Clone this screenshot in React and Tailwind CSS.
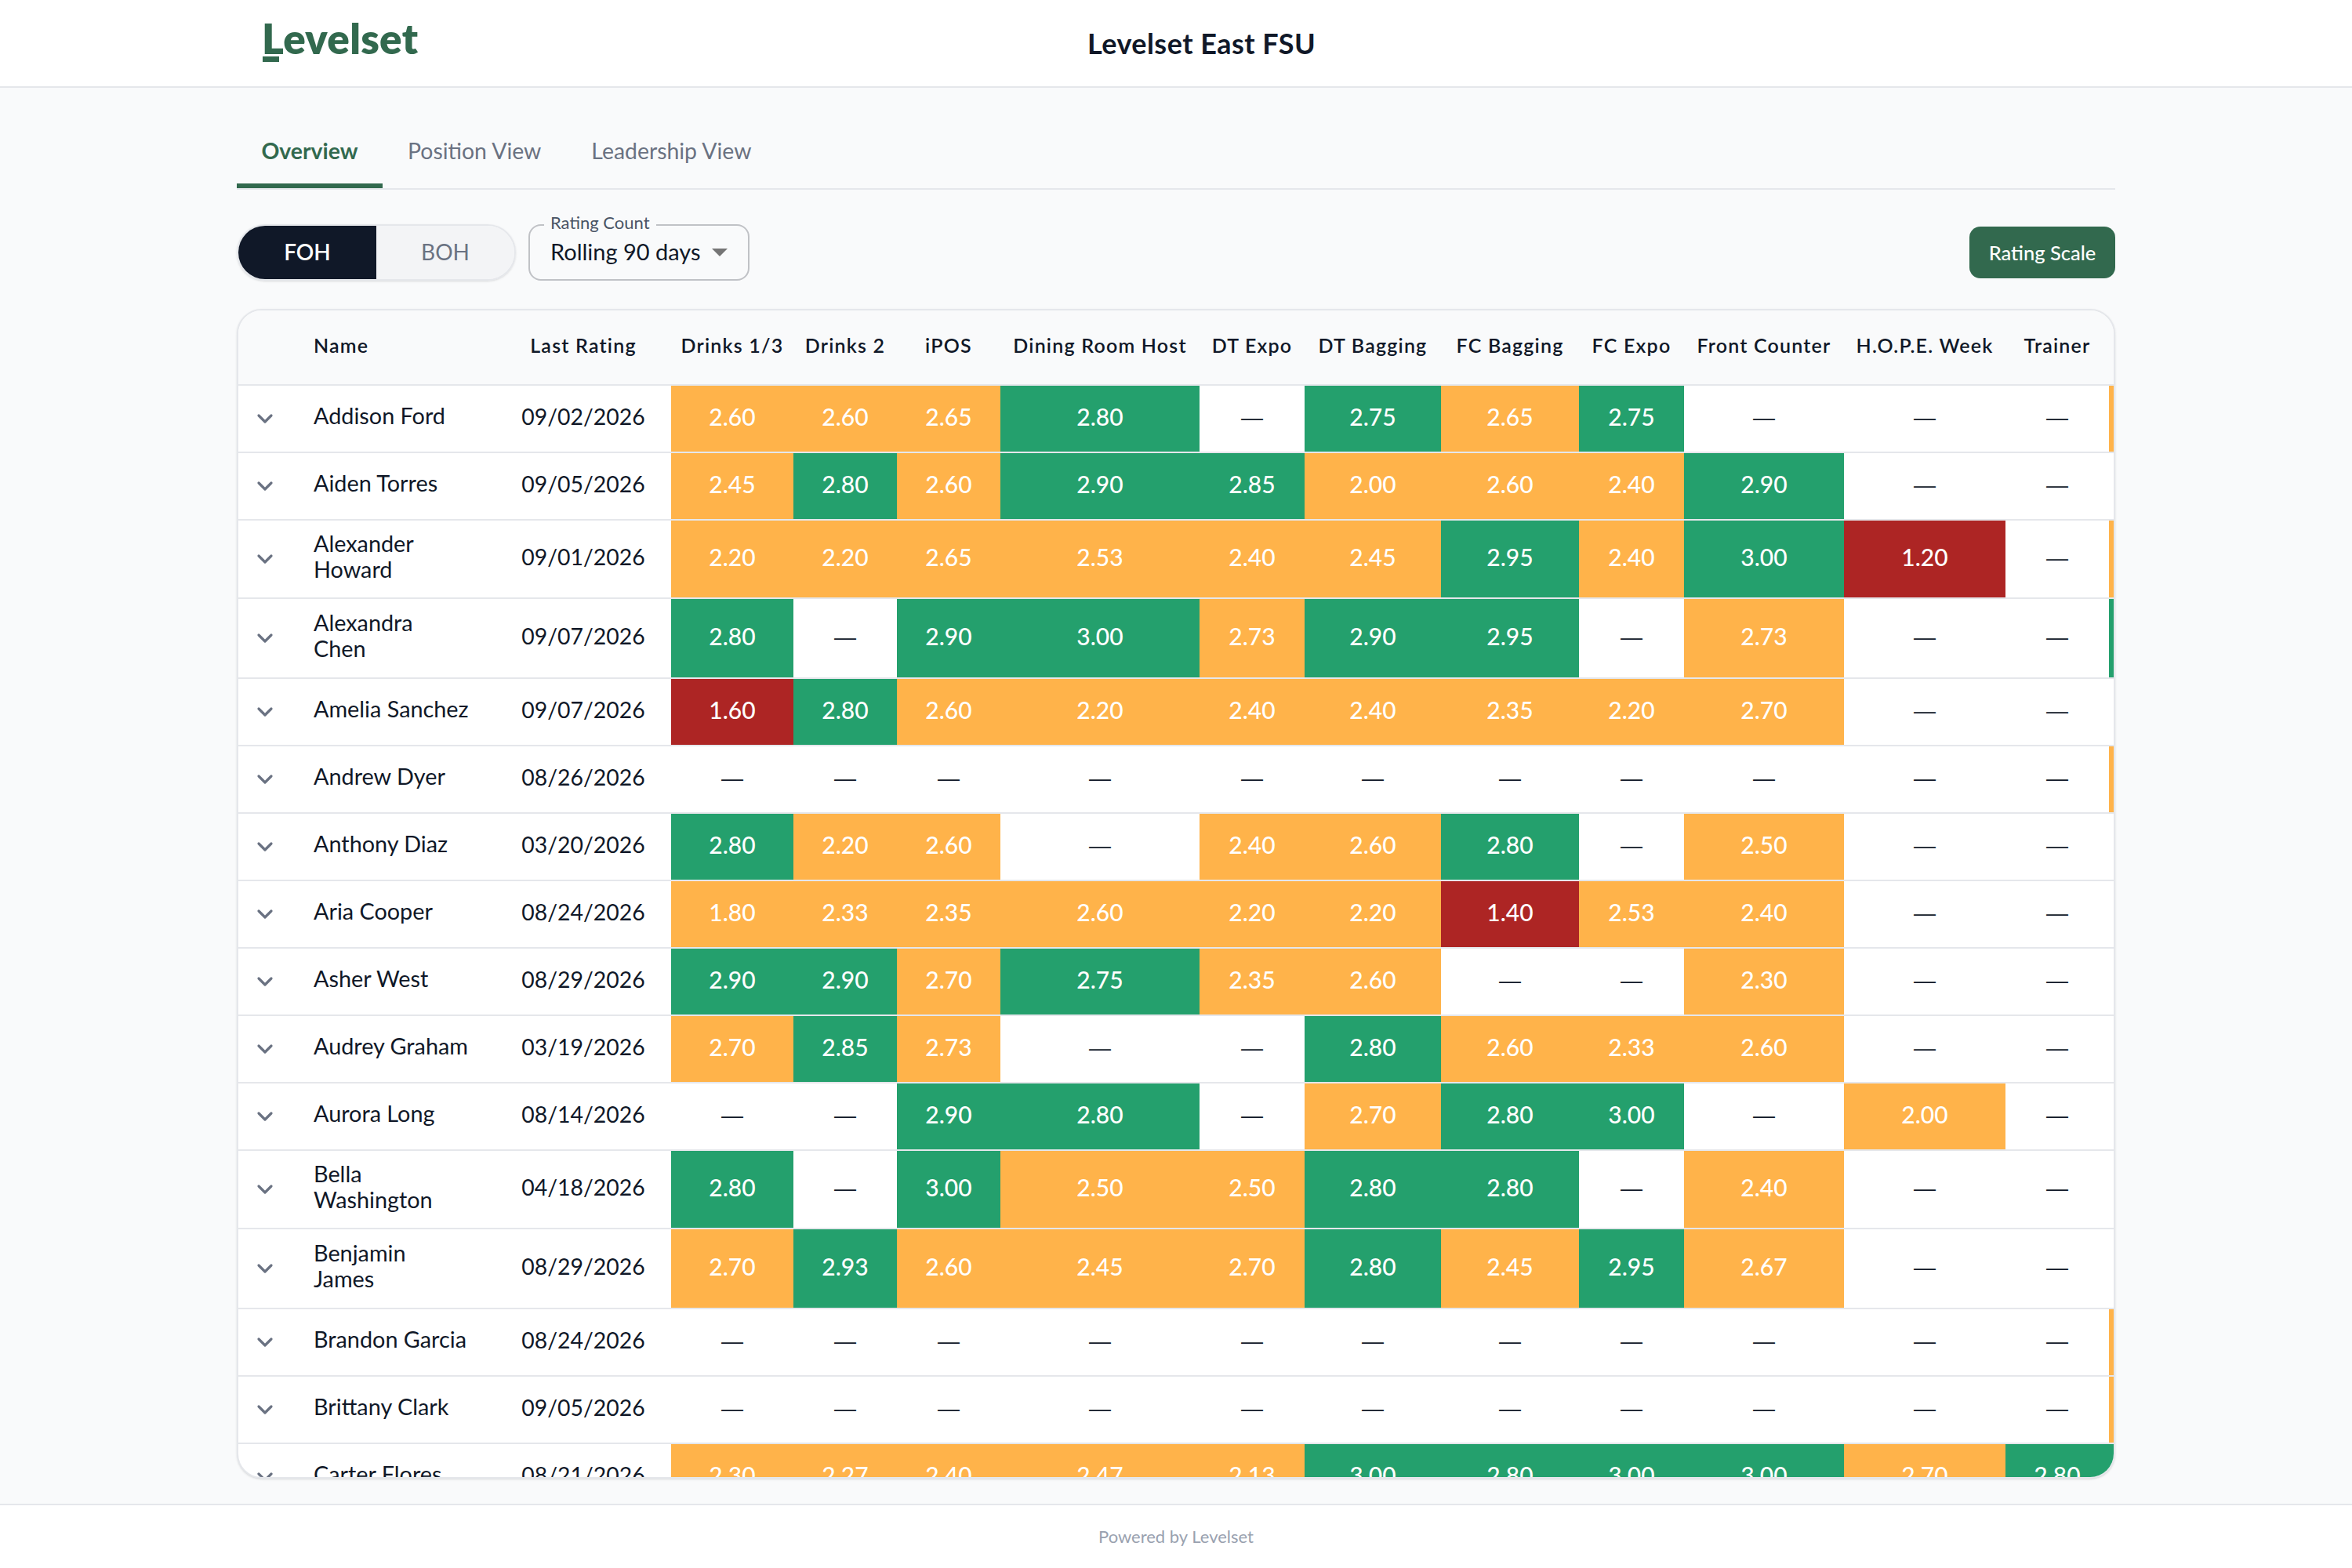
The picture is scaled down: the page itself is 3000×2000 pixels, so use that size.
import { ChevronDown } from 'lucide-react'

const columns = [
  'Drinks 1/3',
  'Drinks 2',
  'iPOS',
  'Dining Room Host',
  'DT Expo',
  'DT Bagging',
  'FC Bagging',
  'FC Expo',
  'Front Counter',
  'H.O.P.E. Week',
  'Trainer',
]

const colWidths = [
  'w-[68px]',
  'w-[260px]',
  'w-[224px]',
  'w-[156px]',
  'w-[132px]',
  'w-[132px]',
  'w-[254px]',
  'w-[134px]',
  'w-[174px]',
  'w-[176px]',
  'w-[134px]',
  'w-[204px]',
  'w-[206px]',
  'w-[132px]',
  'w-[6px]',
]

const _ = null
const none = [_, _, _, _, _, _, _, _, _, _, _]

const rows = [
  { name: 'Addison Ford', date: '09/02/2026', bar: 'bg-[#ffb34a]', scores: ['2.60', '2.60', '2.65', '2.80', _, '2.75', '2.65', '2.75', _, _, _] },
  { name: 'Aiden Torres', date: '09/05/2026', scores: ['2.45', '2.80', '2.60', '2.90', '2.85', '2.00', '2.60', '2.40', '2.90', _, _] },
  { name: 'Alexander Howard', date: '09/01/2026', tall: 'h-[100px]', bar: 'bg-[#ffb34a]', scores: ['2.20', '2.20', '2.65', '2.53', '2.40', '2.45', '2.95', '2.40', '3.00', '1.20', _] },
  { name: 'Alexandra Chen', date: '09/07/2026', tall: 'h-[102px]', bar: 'bg-[#24a06d]', scores: ['2.80', _, '2.90', '3.00', '2.73', '2.90', '2.95', _, '2.73', _, _] },
  { name: 'Amelia Sanchez', date: '09/07/2026', scores: ['1.60', '2.80', '2.60', '2.20', '2.40', '2.40', '2.35', '2.20', '2.70', _, _] },
  { name: 'Andrew Dyer', date: '08/26/2026', bar: 'bg-[#ffb34a]', scores: none },
  { name: 'Anthony Diaz', date: '03/20/2026', scores: ['2.80', '2.20', '2.60', _, '2.40', '2.60', '2.80', _, '2.50', _, _] },
  { name: 'Aria Cooper', date: '08/24/2026', scores: ['1.80', '2.33', '2.35', '2.60', '2.20', '2.20', '1.40', '2.53', '2.40', _, _] },
  { name: 'Asher West', date: '08/29/2026', scores: ['2.90', '2.90', '2.70', '2.75', '2.35', '2.60', _, _, '2.30', _, _] },
  { name: 'Audrey Graham', date: '03/19/2026', scores: ['2.70', '2.85', '2.73', _, _, '2.80', '2.60', '2.33', '2.60', _, _] },
  { name: 'Aurora Long', date: '08/14/2026', scores: [_, _, '2.90', '2.80', _, '2.70', '2.80', '3.00', _, '2.00', _] },
  { name: 'Bella Washington', date: '04/18/2026', tall: 'h-[100px]', scores: ['2.80', _, '3.00', '2.50', '2.50', '2.80', '2.80', _, '2.40', _, _] },
  { name: 'Benjamin James', date: '08/29/2026', tall: 'h-[102px]', scores: ['2.70', '2.93', '2.60', '2.45', '2.70', '2.80', '2.45', '2.95', '2.67', _, _] },
  { name: 'Brandon Garcia', date: '08/24/2026', bar: 'bg-[#ffb34a]', scores: none },
  { name: 'Brittany Clark', date: '09/05/2026', bar: 'bg-[#ffb34a]', scores: none },
  { name: 'Carter Flores', date: '08/21/2026', bar: 'bg-[#24a06d]', scores: ['2.30', '2.27', '2.40', '2.47', '2.13', '3.00', '2.80', '3.00', '3.00', '2.70', '2.80'] },
]

function scoreColor(score) {
  const n = Number(score)
  if (n >= 2.75) return 'bg-[#24a06d]'
  if (n < 1.75) return 'bg-[#ad2524]'
  return 'bg-[#ffb34a]'
}

function ScoreCell({ score }) {
  if (!score) {
    return (
      <td className="border-b-2 border-gray-200 pb-[2px] text-center font-['Liberation_Sans',sans-serif] text-[28px] text-gray-900">
        —
      </td>
    )
  }
  return (
    <td className={`border-b-2 border-gray-200 pb-[6px] text-center text-[30px] font-medium text-white ${scoreColor(score)}`}>
      {score}
    </td>
  )
}

function Row({ row }) {
  const twoLines = Boolean(row.tall)
  return (
    <tr className={row.tall || 'h-[86px]'}>
      <td className="border-b-2 border-gray-200 pl-[18px]">
        <ChevronDown size={32} strokeWidth={2.4} className="text-gray-500" />
      </td>
      <td className="border-b-2 border-gray-200 pb-[6px] pl-[28px] text-[28.8px] text-gray-900">
        {twoLines ? (
          <div className="leading-[33px]">
            {row.name.split(' ').map((part) => (
              <div key={part}>{part}</div>
            ))}
          </div>
        ) : (
          row.name
        )}
      </td>
      <td className="border-b-2 border-gray-200 pb-[6px] text-center text-[28.4px] text-gray-900">{row.date}</td>
      {row.scores.map((score, i) => (
        <ScoreCell key={i} score={score} />
      ))}
      <td className={`border-b-2 border-gray-200 ${row.bar || ''}`} />
    </tr>
  )
}

export default function App() {
  return (
    <div className="flex h-screen flex-col bg-gray-50 font-[Lato,sans-serif] text-gray-900">
      <header className="flex h-[112px] shrink-0 items-center border-b-2 border-gray-200 bg-white pl-[334px]">
        <div className="mb-[5px] flex w-[197px] flex-col">
          <span className="text-[53px] leading-[46px] font-extrabold tracking-[0.3px] text-[#32694e]">Levelset</span>
          <span className="ml-[1px] h-[7px] w-[21px] bg-[#32694e]" />
        </div>
        <h1 className="ml-[856px] text-[36px] font-bold tracking-[0.45px]">Levelset East FSU</h1>
      </header>

      <main className="mx-auto flex min-h-0 w-[2396px] flex-1 flex-col pt-[38px] pb-[32px]">
        <nav className="flex h-[92px] shrink-0 border-b-2 border-gray-200 text-[28.4px]">
          <a className="flex h-[90px] w-[186px] items-center justify-center border-b-[6px] border-[#32694e] font-bold text-[#32694e]">
            Overview
          </a>
          <a className="flex h-[90px] items-center px-[32px] pb-[6px] text-gray-500">Position View</a>
          <a className="flex h-[90px] items-center px-[32px] pb-[6px] text-gray-500">Leadership View</a>
        </nav>

        <div className="mt-[44px] flex shrink-0 items-center justify-between">
          <div className="flex items-center gap-[16px]">
            <div className="flex h-[72px] w-[356px] overflow-hidden rounded-full border-2 border-gray-200 text-[28px] shadow-sm">
              <button className="w-[176px] bg-gray-900 pb-[2px] font-semibold text-white">FOH</button>
              <button className="flex-1 bg-gray-100 pb-[2px] text-gray-500">BOH</button>
            </div>
            <div className="relative flex h-[72px] w-[282px] items-center justify-between rounded-[16px] border-2 border-[#c0c2c6] px-[26px]">
              <span className="absolute top-[-15px] left-[18px] bg-gray-50 px-[8px] text-[22px] leading-[22px] text-gray-600">
                Rating Count
              </span>
              <span className="pb-[2px] text-[29px]">Rolling 90 days</span>
              <svg viewBox="0 0 20 10" className="h-[10px] w-[20px] fill-[#757575]">
                <path d="M0 0h20L10 10z" />
              </svg>
            </div>
          </div>
          <button className="h-[66px] w-[186px] rounded-[14px] bg-[#32694e] text-[25.5px] font-medium text-white">
            Rating Scale
          </button>
        </div>

        <div className="mt-[36px] min-h-0 flex-1 overflow-hidden rounded-[32px] border-2 border-gray-200 bg-white shadow-sm">
          <table className="w-[2392px] table-fixed border-separate border-spacing-0">
            <colgroup>
              {colWidths.map((w, i) => (
                <col key={i} className={w} />
              ))}
            </colgroup>
            <thead>
              <tr className="h-[96px] bg-gray-50 text-[25px] tracking-[1.2px]">
                <th className="border-b-2 border-gray-200" />
                <th className="border-b-2 border-gray-200 pb-[4px] pl-[28px] text-left font-semibold">Name</th>
                <th className="border-b-2 border-gray-200 pb-[4px] font-semibold">Last Rating</th>
                {columns.map((col) => (
                  <th key={col} className="border-b-2 border-gray-200 pb-[4px] font-semibold whitespace-nowrap">
                    {col}
                  </th>
                ))}
                <th className="border-b-2 border-gray-200" />
              </tr>
            </thead>
            <tbody>
              {rows.map((row) => (
                <Row key={row.name} row={row} />
              ))}
            </tbody>
          </table>
        </div>
      </main>

      <footer className="flex h-[82px] shrink-0 items-center justify-center border-t-2 border-gray-200 bg-white pb-[2px] text-[22px] text-gray-400">
        Powered by Levelset
      </footer>
    </div>
  )
}
